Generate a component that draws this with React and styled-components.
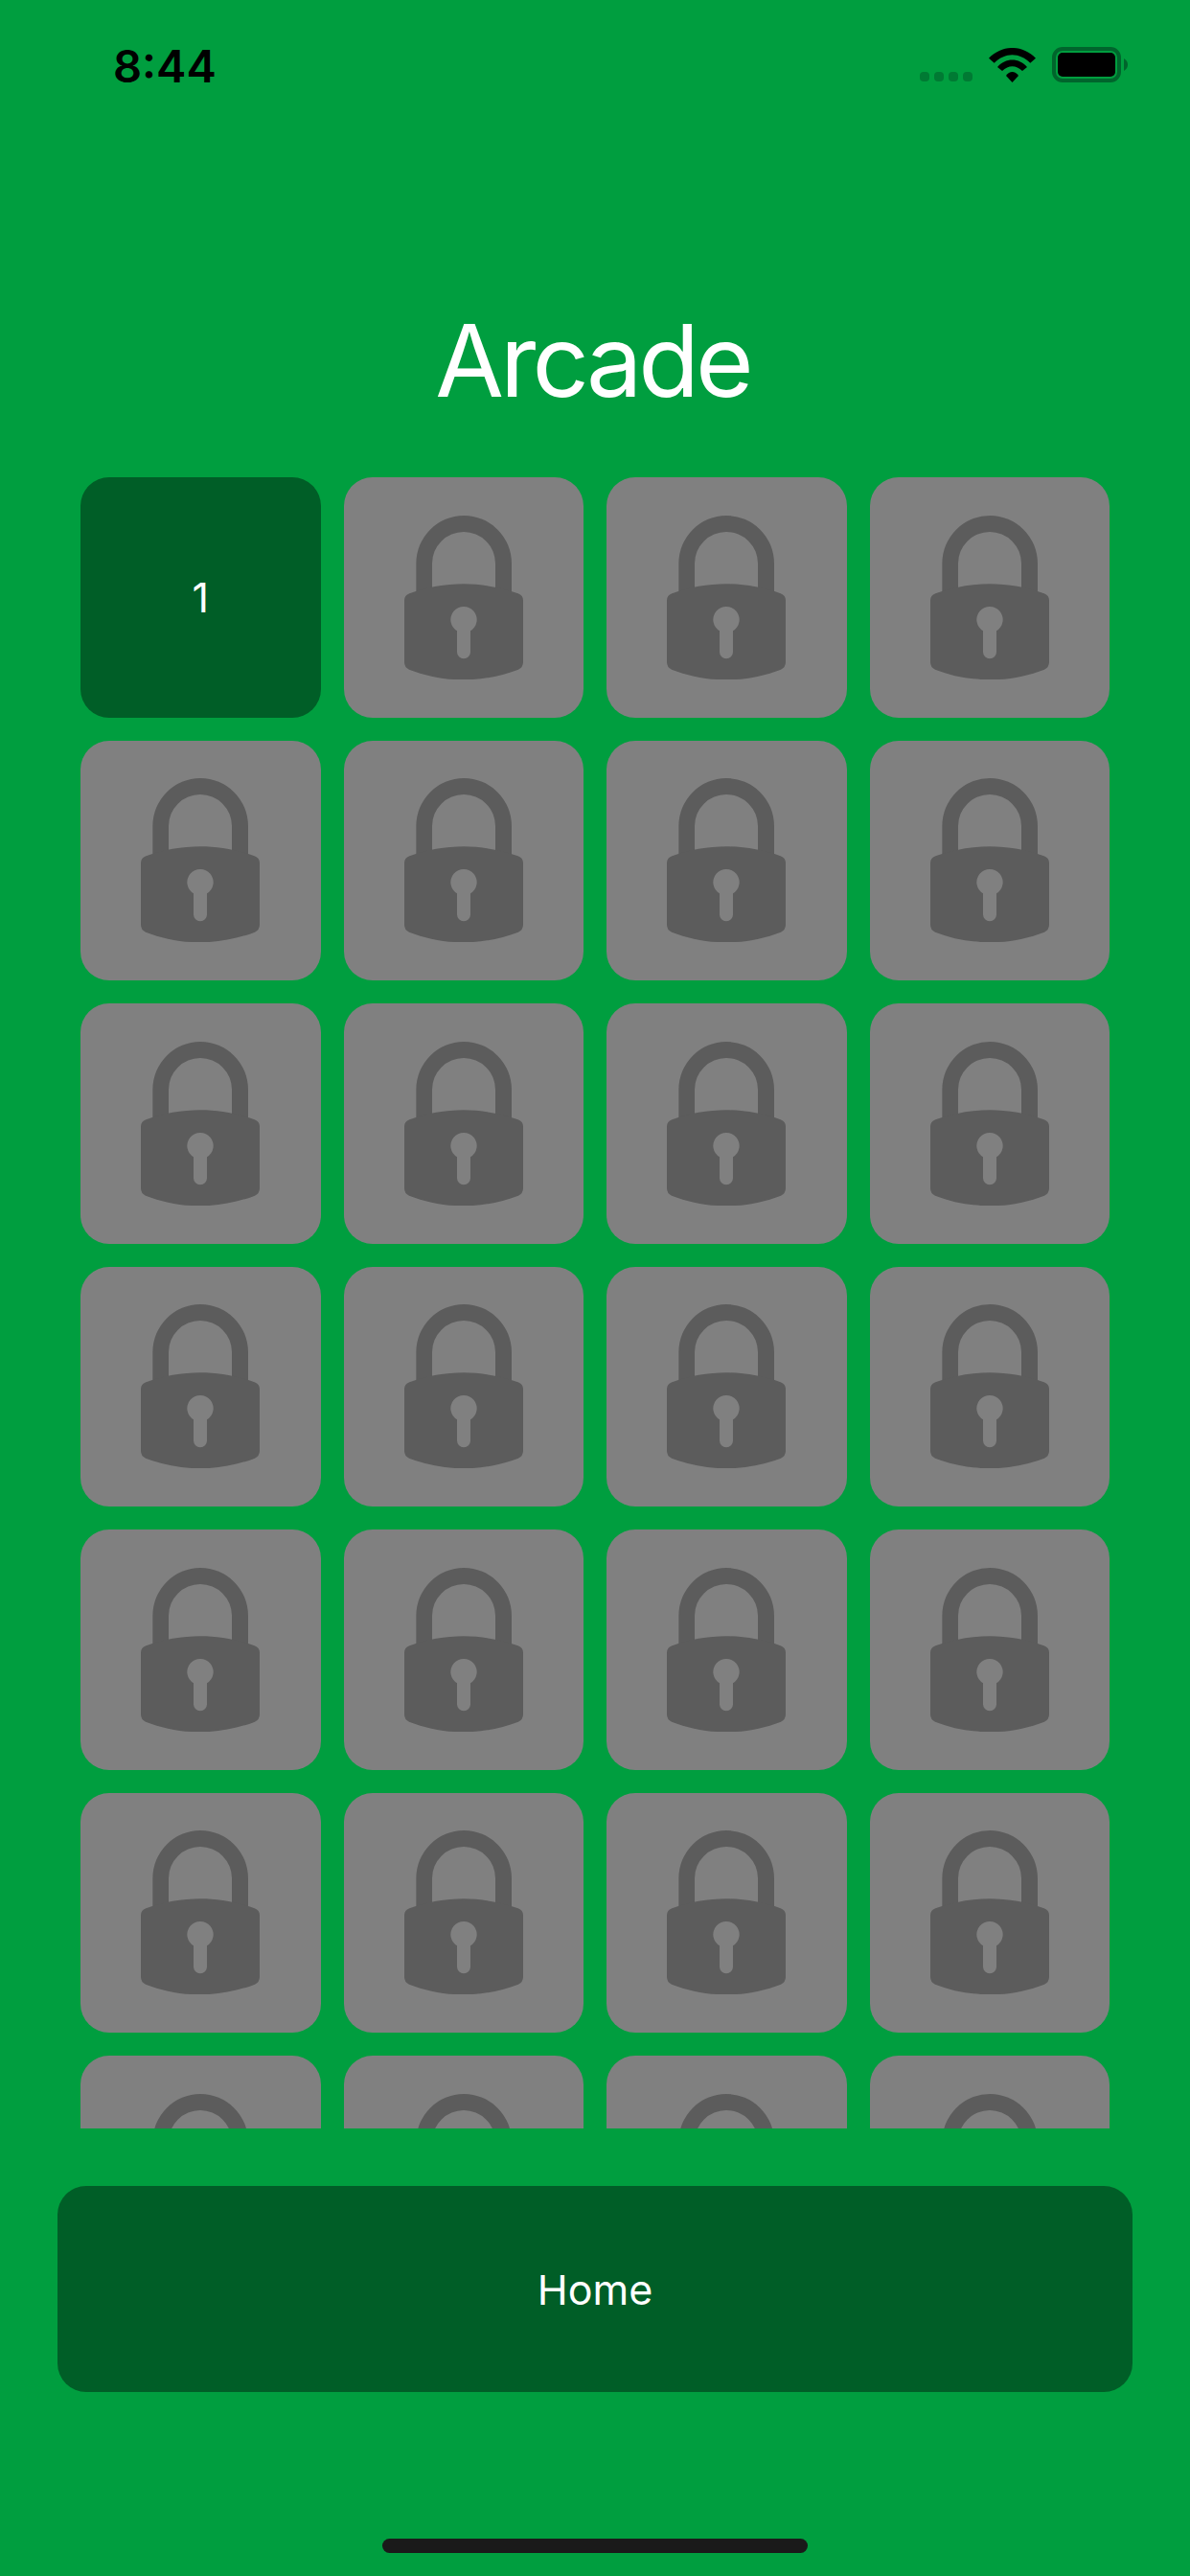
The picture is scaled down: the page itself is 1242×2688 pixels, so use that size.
import React from 'react';
import styled, { createGlobalStyle } from 'styled-components';

const GlobalStyle = createGlobalStyle`
  html, body {
    margin: 0;
    padding: 0;
    background: #009e3f;
  }
`;

const Page = styled.div`
  display: flex;
  flex-direction: column;
  width: 1242px;
  height: 2688px;
  overflow: hidden;
  background: #009e3f;
  font-family: Inter, "Liberation Sans", sans-serif;
  color: #fff;
`;

const StatusBar = styled.div`
  display: flex;
  justify-content: space-between;
  align-items: flex-start;
  box-sizing: border-box;
  height: 110px;
  padding: 49px 65px 0 118px;
`;

const Clock = styled.div`
  font-size: 47px;
  font-weight: 600;
  line-height: 38px;
  margin-top: 1px;
  color: #000;
`;

const StatusIcons = styled.div`
  display: flex;
  align-items: flex-end;
  gap: 17px;
  height: 37px;
`;

const SignalDots = styled.div`
  display: flex;
  gap: 5px;
  margin-bottom: 1px;
`;

const SignalDot = styled.span`
  width: 10px;
  height: 10px;
  border-radius: 4px;
  background: #007a33;
`;

const Title = styled.h1`
  margin: 201px 0 57px;
  padding-right: 5px;
  font-size: 104px;
  font-weight: 400;
  line-height: 130px;
  letter-spacing: -4px;
  text-align: center;
`;

const LevelScroller = styled.div`
  box-sizing: border-box;
  height: 1723px;
  padding: 0 84px;
  overflow: hidden;
  flex-shrink: 0;
`;

const LevelGrid = styled.div`
  display: grid;
  grid-template-columns: repeat(4, 1fr);
  grid-auto-rows: 250.5px;
  gap: 24px;
`;

const Level = styled.div`
  display: flex;
  align-items: center;
  justify-content: center;
  border-radius: 30px;
  background: ${(p) => (p.$locked ? '#808080' : '#005e27')};
  font-size: 43px;
`;

const HomeButton = styled.button`
  display: block;
  flex-shrink: 0;
  height: 215px;
  margin: 60px 60px 0;
  padding: 0;
  border: 0;
  border-radius: 30px;
  background: #005e27;
  color: #fff;
  font-family: inherit;
  font-size: 43px;
`;

const HomeIndicator = styled.div`
  flex-shrink: 0;
  align-self: center;
  width: 444px;
  height: 15px;
  margin-top: 153px;
  border-radius: 8px;
  background: #1a1a1a;
`;

function LockIcon() {
  return (
    <svg width="124" height="171.3" viewBox="246 173 372 514" fill="#5c5c5c">
      <path d="M283 415V323A149.5 150 0 0 1 582 323V415H531V323A99 99 0 0 0 333 323V415Z" />
      <path
        fillRule="evenodd"
        d="M262 417C315 398 375 387 432 387C489 387 549 398 602 417Q618 423 618 438V632Q618 648 603 655C549 676 489 687 432 687C375 687 315 676 261 655Q246 648 246 632V438Q246 423 262 417ZM411 534A41 41 0 1 1 453 534V600A21 21 0 0 1 411 600Z"
      />
    </svg>
  );
}

function WifiIcon() {
  return (
    <svg width="49" height="36" viewBox="0 0 49 36" fill="#000">
      <path d="M0 10.7C14 -3.6 35 -3.6 49 10.7L43.3 15.7C32 4.3 17 4.3 5.7 15.7Z" />
      <path d="M9 20C17 10 32 10 40 20L35 24C28.500 17.500 20.500 17.500 14 24Z" />
      <path d="M18 29C21.500 23.500 27.500 23.500 31 29L24.500 36Z" />
    </svg>
  );
}

function BatteryIcon() {
  return (
    <svg width="79" height="37" viewBox="0 0 79 37">
      <rect x="2" y="2" width="68" height="33" rx="9" fill="none" stroke="#00652c" strokeWidth="4" />
      <rect x="6" y="6" width="60" height="25" rx="5" fill="#000" />
      <path d="M75 12C78 14 79 16 79 18.500C79 21 78 23 75 25Z" fill="#00652c" />
    </svg>
  );
}

export default function App() {
  const levels = Array.from({ length: 28 }, (_, i) => i + 1);

  return (
    <Page>
      <GlobalStyle />
      <StatusBar>
        <Clock>8:44</Clock>
        <StatusIcons>
          <SignalDots>
            {[0, 1, 2, 3].map((d) => (
              <SignalDot key={d} />
            ))}
          </SignalDots>
          <WifiIcon />
          <BatteryIcon />
        </StatusIcons>
      </StatusBar>
      <Title>Arcade</Title>
      <LevelScroller>
        <LevelGrid>
          {levels.map((n) =>
            n === 1 ? (
              <Level key={n}>{n}</Level>
            ) : (
              <Level key={n} $locked>
                <LockIcon />
              </Level>
            )
          )}
        </LevelGrid>
      </LevelScroller>
      <HomeButton type="button">Home</HomeButton>
      <HomeIndicator />
    </Page>
  );
}
